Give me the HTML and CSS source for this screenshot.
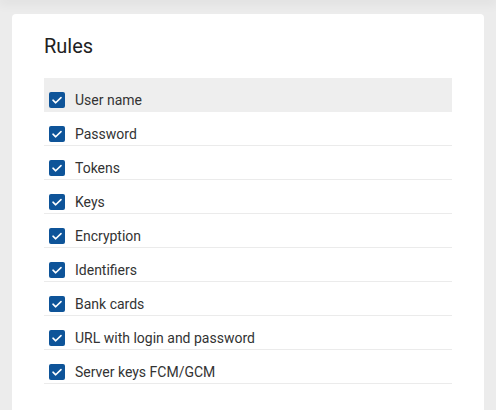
FILE: index.html
```html
<!DOCTYPE html>
<html>
<head>
  <meta charset="utf-8">
  <title>Rules</title>
  <link rel="stylesheet" href="styles.css">
</head>
<body>
  <div class="topbar"></div>
  <div class="card">
    <h1>Rules</h1>

    <ul class="rules">
      <li class="rule active">
        <span class="check"><svg viewBox="0 0 16 16"><path d="M4 8.2l2.7 2.6L12 5.6"/></svg></span>
        <span class="label">User name</span>
      </li>
      <li class="rule">
        <span class="check"><svg viewBox="0 0 16 16"><path d="M4 8.2l2.7 2.6L12 5.6"/></svg></span>
        <span class="label">Password</span>
      </li>
      <li class="rule">
        <span class="check"><svg viewBox="0 0 16 16"><path d="M4 8.2l2.7 2.6L12 5.6"/></svg></span>
        <span class="label">Tokens</span>
      </li>
      <li class="rule">
        <span class="check"><svg viewBox="0 0 16 16"><path d="M4 8.2l2.7 2.6L12 5.6"/></svg></span>
        <span class="label">Keys</span>
      </li>
      <li class="rule">
        <span class="check"><svg viewBox="0 0 16 16"><path d="M4 8.2l2.7 2.6L12 5.6"/></svg></span>
        <span class="label">Encryption</span>
      </li>
      <li class="rule">
        <span class="check"><svg viewBox="0 0 16 16"><path d="M4 8.2l2.7 2.6L12 5.6"/></svg></span>
        <span class="label">Identifiers</span>
      </li>
      <li class="rule">
        <span class="check"><svg viewBox="0 0 16 16"><path d="M4 8.2l2.7 2.6L12 5.6"/></svg></span>
        <span class="label">Bank cards</span>
      </li>
      <li class="rule">
        <span class="check"><svg viewBox="0 0 16 16"><path d="M4 8.2l2.7 2.6L12 5.6"/></svg></span>
        <span class="label">URL with login and password</span>
      </li>
      <li class="rule">
        <span class="check"><svg viewBox="0 0 16 16"><path d="M4 8.2l2.7 2.6L12 5.6"/></svg></span>
        <span class="label">Server keys FCM/GCM</span>
      </li>
    </ul>
  </div>
</body>
</html>
```

FILE: styles.css
```css
html, body {
  height: 100%;
}

body {
  margin: 0;
  font-family: Roboto, "Liberation Sans", Arial, sans-serif;
  background: #ececec;
  overflow: hidden;
}

.topbar {
  height: 0;
  box-shadow: 0 0 12px 2px rgba(0, 0, 0, 0.12);
}

.card {
  box-sizing: border-box;
  margin: 14px 12px 0;
  padding: 20px 32px 0;
  height: calc(100vh - 14px);
  background: #fff;
  border-radius: 4px 4px 0 0;
}

h1 {
  margin: 0 0 20px;
  font-size: 20px;
  line-height: 24px;
  font-weight: 400;
  color: #212121;
}

ul.rules {
  list-style: none;
  margin: 0;
  padding: 0;
}

.rule {
  display: flex;
  align-items: center;
  gap: 10px;
  padding: 14px 5px 3px;
  border-bottom: 1px solid #ebebeb;
  font-size: 14px;
  line-height: 16px;
  color: #333;
}

.rule.active {
  background: #eeeeee;
  border-bottom-color: #eeeeee;
}

.check {
  display: block;
  width: 16px;
  height: 16px;
  border-radius: 2px;
  background: #0e5499;
}

.check svg {
  display: block;
  width: 16px;
  height: 16px;
  fill: none;
  stroke: #fff;
  stroke-width: 1.6;
  stroke-linecap: round;
  stroke-linejoin: round;
}
```
